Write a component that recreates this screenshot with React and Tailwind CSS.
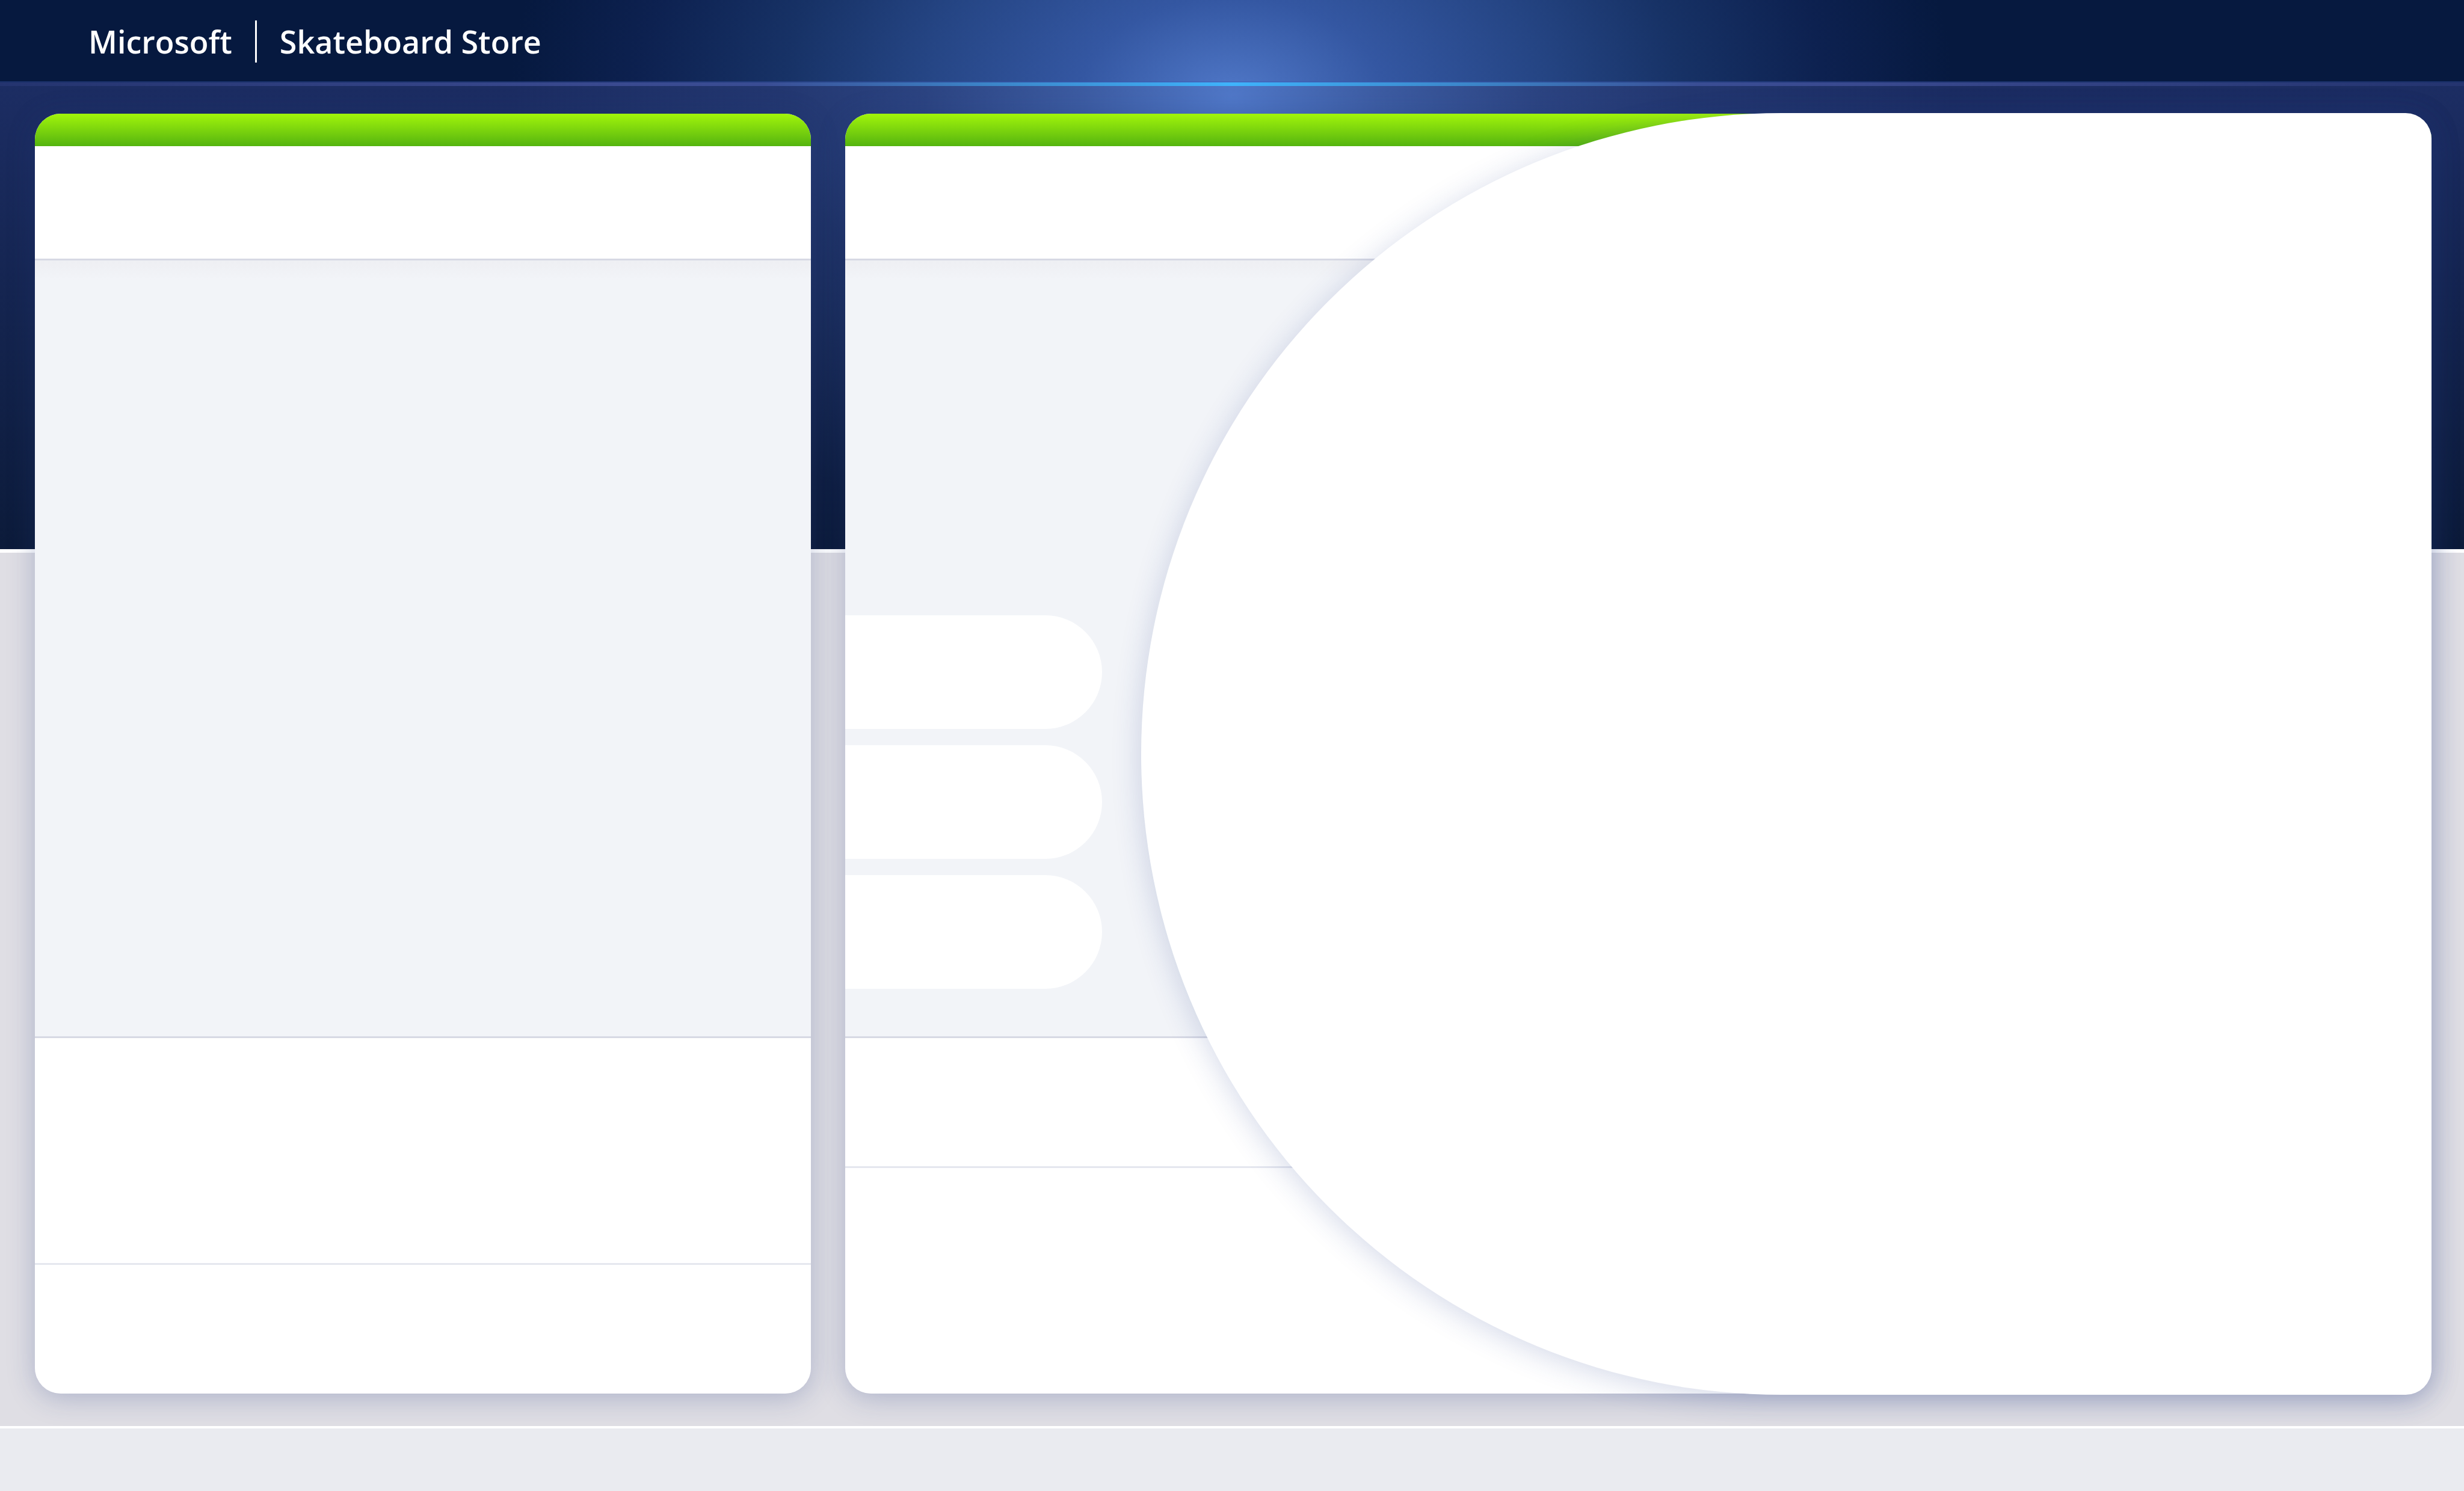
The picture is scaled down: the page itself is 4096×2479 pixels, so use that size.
const greenBar = "h-[54px] bg-linear-to-b from-[#9ef20a] from-5% to-[#54b40f]";
const card =
  "relative flex flex-col overflow-hidden rounded-[43px] bg-white";
const cardShadow = "rounded-[43px] shadow-[0_7px_46px_rgba(36,60,130,0.27)]";
const middle =
  "flex-1 border-b-3 border-[#d7d9e4] bg-[#f2f4f8] bg-[linear-gradient(180deg,#eeeff3_0px,#f2f4f8_32px)]";

function ListCard() {
  return (
    <section className={`${cardShadow} grid w-[1290px] shrink-0`}>
      <div className={card}>
        <div className={greenBar} />
        <div className="h-[190px] border-b-3 border-[#d7d9e4]" />
        <div className={middle} />
        <div className="h-[377px] border-b-3 border-[#e5e7ef]" />
        <div className="h-[214px]" />
      </div>
    </section>
  );
}

function DetailCard() {
  return (
    <section className={`${cardShadow} relative grid flex-1`}>
      <div className={card}>
        <div className={greenBar} />
        <div className="h-[190px] border-b-3 border-[#d7d9e4]" />
        <div className={`${middle} flex flex-col justify-end gap-[27px] pb-[79px]`}>
          <div className="h-[189px] w-[427px] rounded-r-full bg-white" />
          <div className="h-[189px] w-[427px] rounded-r-full bg-white" />
          <div className="h-[189px] w-[427px] rounded-r-full bg-white" />
        </div>
        <div className="h-[216px] border-b-3 border-[#e5e7ef]" />
        <div className="h-[375px]" />
      </div>
      <div className="absolute -top-px right-0 -bottom-[2px] left-[492px] rounded-l-[1065px] rounded-r-[43px] bg-white shadow-[0_7px_50px_rgba(36,60,140,0.2)]" />
    </section>
  );
}

export default function App() {
  return (
    <div className="flex min-h-screen flex-col bg-[#eaebf0] font-['Open_Sans',sans-serif]">
      <header className="flex h-[137px] shrink-0 items-center bg-[radial-gradient(1200px_780px_at_50%_160px,#5078c8_0%,#3457a2_21%,#254584_43%,#173266_62%,#0d2150_82%,#06193f_100%)] pl-[147px] text-[52px] font-semibold text-white shadow-[inset_0_-2px_0_rgba(60,90,180,0.35)]">
        <a href="#home">Microsoft</a>
        <span className="mx-[38px] h-[70px] w-[3px] bg-white" />
        <h1>Skateboard Store</h1>
      </header>
      <div className="h-[6px] shrink-0 bg-[linear-gradient(90deg,#24346f,#3a4a90_25%,#3a4d94_31%,#3c84c8_40%,#3fb3fb_50%,#3c84c8_60%,#3a4d94_69%,#3a4a90_75%,#24346f)]" />
      <main className="flex flex-1 gap-[57px] border-b-4 border-white bg-[radial-gradient(1200px_780px_at_50%_17px,rgb(80,120,200)_0%,rgba(80,120,200,0.62)_21%,rgba(80,120,200,0.3)_43%,rgba(80,120,200,0.14)_62%,rgba(80,120,200,0)_100%),linear-gradient(180deg,#1c2d63_0px,#0c1b3a_770px,#ffffff_770px,#ffffff_776px,#dfdee4_776px)] pt-[46px] pr-[54px] pb-[54px] pl-[58px]">
        <ListCard />
        <DetailCard />
      </main>
      <footer className="h-[104px] shrink-0" />
    </div>
  );
}
